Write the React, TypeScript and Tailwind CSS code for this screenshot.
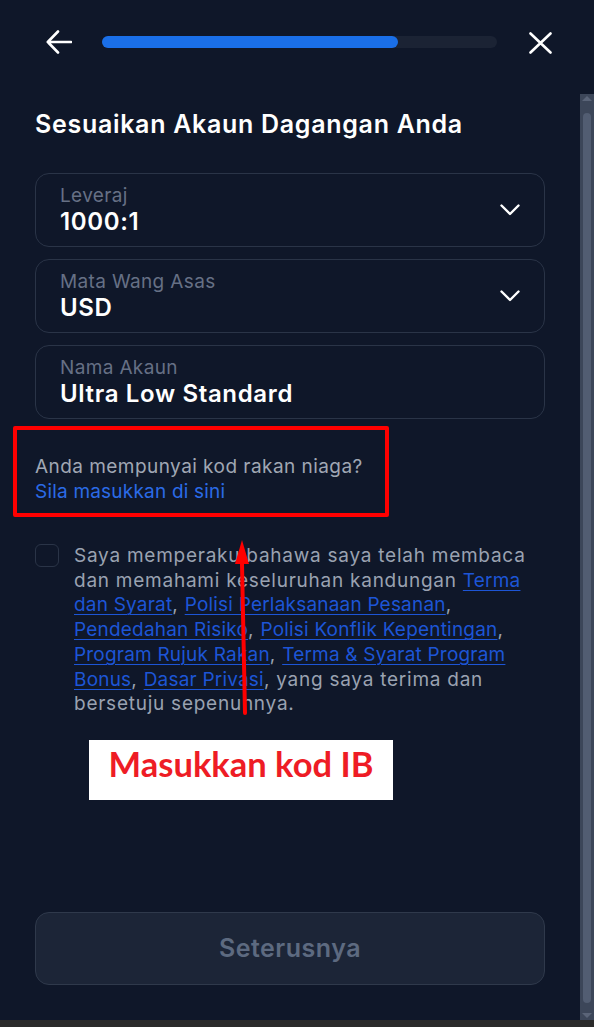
import React from "react";

const font = { fontFamily: "Inter, 'Noto Sans', sans-serif" };

const Chevron = () => (
  <svg width="20" height="12" viewBox="0 0 20 12" fill="none" className="shrink-0">
    <path d="M1.5 1.5 L10 10 L18.5 1.5" stroke="white" strokeWidth="2.4" strokeLinecap="round" strokeLinejoin="round" />
  </svg>
);

const Field: React.FC<{ label: string; value: string; select?: boolean }> = ({ label, value, select }) => (
  <div className="flex h-[74px] items-center justify-between rounded-[14px] border border-[#2a3447] pl-[24px] pr-[24px]">
    <div className="flex flex-col">
      <span className="text-[19px] leading-[23px] tracking-[0.35px] text-[#667085]">{label}</span>
      <span className="mt-[1px] text-[24px] font-semibold leading-[28px] tracking-[0.65px] text-white">{value}</span>
    </div>
    {select && <Chevron />}
  </div>
);

const A: React.FC<{ children: React.ReactNode }> = ({ children }) => (
  <a className="tracking-[0.2px] text-[#1d55d6] underline decoration-1 underline-offset-[3px]">{children}</a>
);

const App: React.FC = () => {
  return (
    <div className="flex h-[1027px] w-[594px] flex-col bg-[#0f1729]" style={font}>
      {/* top bar */}
      <div className="flex h-[94px] shrink-0 items-start pt-[30px]">
        <button className="ml-[46px]">
          <svg width="26" height="24" viewBox="0 0 26 24" fill="none">
            <path d="M12 1.5 L1.8 12 L12 22.5 M1.8 12 H25" stroke="white" strokeWidth="2.6" strokeLinecap="round" strokeLinejoin="round" />
          </svg>
        </button>
        <div className="ml-[30px] mt-[6px] h-[12px] w-[395px] rounded-full bg-[#1b2334]">
          <div className="h-full w-[296px] rounded-full bg-[#1a6fe8]" />
        </div>
        <button className="ml-[32px] mt-[2px]">
          <svg width="23" height="22" viewBox="0 0 23 22" fill="none">
            <path d="M1.5 1.5 L21.5 20.5 M21.5 1.5 L1.5 20.5" stroke="white" strokeWidth="2.6" strokeLinecap="round" />
          </svg>
        </button>
      </div>

      <div className="flex min-h-0 flex-1">
        <div className="relative flex flex-1 flex-col px-[35px] pt-[14px] pb-[35px]">
          <h1 className="text-[25px] font-semibold leading-[32px] tracking-[0.7px] text-white">Sesuaikan Akaun Dagangan Anda</h1>

          <div className="mt-[33px] flex flex-col gap-[12px]">
            <Field label="Leveraj" value="1000:1" select />
            <Field label="Mata Wang Asas" value="USD" select />
            <Field label="Nama Akaun" value="Ultra Low Standard" />
          </div>

          <div className="-ml-[22px] mt-[7px] w-[376px] rounded-[2px] border-[4px] border-[#ff0000] pb-[9px] pl-[18px] pt-[24px]">
            <p className="text-[19px] leading-[25px] tracking-[0.45px] text-[#a0a7b4]">Anda mempunyai kod rakan niaga?</p>
            <a className="block text-[19px] leading-[25px] tracking-[0.2px] text-[#2b6be6]">Sila masukkan di sini</a>
          </div>

          <div className="mt-[27px] flex gap-[15px]">
            <div className="h-[23px] w-[24px] shrink-0 rounded-[6px] border border-[#2a3447]" />
            <p className="whitespace-nowrap text-[19px] leading-[24.7px] tracking-[0.75px] text-[#9aa2b1]">
              Saya memperaku bahawa saya telah membaca
              <br />
              dan memahami keseluruhan kandungan <A>Terma</A>
              <br />
              <A>dan Syarat</A>, <A>Polisi Perlaksanaan Pesanan</A>,
              <br />
              <A>Pendedahan Risiko</A>, <A>Polisi Konflik Kepentingan</A>,
              <br />
              <A>Program Rujuk Rakan</A>, <A>Terma &amp; Syarat Program</A>
              <br />
              <A>Bonus</A>, <A>Dasar Privasi</A>, yang saya terima dan
              <br />
              bersetuju sepenuhnya.
            </p>
          </div>

          <div className="ml-[54px] mt-[23px] flex h-[60px] w-[304px] items-center justify-center bg-white pb-[12px]">
            <span className="text-[34.5px] font-bold leading-[42px] text-[#ee1c25]" style={{ fontFamily: "Lato, sans-serif" }}>
              Masukkan kod IB
            </span>
          </div>

          {/* annotation arrow */}
          <svg className="pointer-events-none absolute left-[228px] top-[446px]" width="22" height="176" viewBox="0 0 22 176" fill="none">
            <path d="M14 24 L17 173" stroke="#ff0000" strokeWidth="4" strokeLinecap="round" />
            <path d="M14 0 L7 24 L21 24 Z" fill="#ff0000" />
          </svg>

          <button className="mt-auto flex h-[73px] w-full items-center justify-center rounded-[14px] border border-[#2f394b] bg-[#1c2537] text-[25px] font-semibold tracking-[0.5px] text-[#5d6a80]">
            Seterusnya
          </button>
        </div>

        {/* scrollbar */}
        <div className="flex w-[14px] shrink-0 flex-col items-center bg-[#3c4659] pb-[2px] pt-[2px]">
          <div className="h-0 w-0 border-x-[5px] border-b-[5px] border-x-transparent border-b-[#5a6478]" />
          <div className="mt-[12px] w-[8px] flex-1 rounded-full bg-[#525d72]" />
          <div className="mt-[10px] h-0 w-0 border-x-[5px] border-t-[5px] border-x-transparent border-t-[#5a6478]" />
        </div>
      </div>
      <div className="h-[7px] shrink-0 bg-[#2a2a2a]" />
    </div>
  );
};

export default App;
